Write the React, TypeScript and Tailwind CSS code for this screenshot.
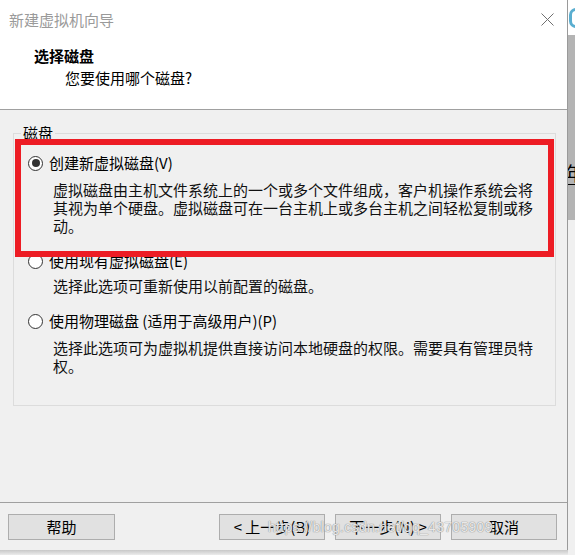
import React from "react";

type DiskOption = {
  label: string;
  desc: string;
  checked?: boolean;
  rowTop: string;
  descTop: string;
};

const options: DiskOption[] = [
  {
    label: "创建新虚拟磁盘(V)",
    desc: "虚拟磁盘由主机文件系统上的一个或多个文件组成，客户机操作系统会将其视为单个硬盘。虚拟磁盘可在一台主机上或多台主机之间轻松复制或移动。",
    checked: true,
    rowTop: "mt-0",
    descTop: "mt-[9px]",
  },
  {
    label: "使用现有虚拟磁盘(E)",
    desc: "选择此选项可重新使用以前配置的磁盘。",
    rowTop: "mt-[17px]",
    descTop: "mt-[7px]",
  },
  {
    label: "使用物理磁盘 (适用于高级用户)(P)",
    desc: "选择此选项可为虚拟机提供直接访问本地硬盘的权限。需要具有管理员特权。",
    rowTop: "mt-[17px]",
    descTop: "mt-[9px]",
  },
];

function Radio({ checked }: { checked?: boolean }) {
  return (
    <span className="w-[15px] h-[15px] rounded-full border border-[#333333] bg-white flex items-center justify-center shrink-0">
      {checked && <span className="w-[8px] h-[8px] rounded-full bg-[#333333]" />}
    </span>
  );
}

function WinButton({ children, className = "" }: { children: React.ReactNode; className?: string }) {
  return (
    <button
      type="button"
      className={`w-[106px] h-[26px] bg-[#e1e1e1] border border-[#adadad] text-[15px] leading-[18px] text-black flex items-center justify-center ${className}`}
    >
      {children}
    </button>
  );
}

export default function App() {
  return (
    <div className="w-[575px] h-[555px] flex bg-[#e6e6e6] overflow-hidden relative font-['Noto_Sans_CJK_SC','Microsoft_YaHei',sans-serif] text-[15px] text-black">
      {/* wizard window */}
      <div className="w-[568px] h-[555px] flex flex-col shrink-0">
        <div className="w-[568px] h-[550px] flex flex-col border-r border-[#9a9a9a]">
          {/* header */}
          <div className="h-[110px] bg-white border-b border-[#a0a0a0] flex flex-col">
            <div className="h-[40px] flex items-center justify-between pl-[9px] pr-[13px]">
              <span className="text-[#9a9a9a] leading-[18px]">新建虚拟机向导</span>
              <svg width="13" height="13" viewBox="0 0 13 13" className="mb-[2px]">
                <path d="M0.5 0.5 L12.5 12.5 M12.5 0.5 L0.5 12.5" stroke="#707070" strokeWidth="1" fill="none" />
              </svg>
            </div>
            <p className="pl-[34px] mt-[7px] leading-[18px] font-bold">选择磁盘</p>
            <p className="pl-[65px] mt-[4px] leading-[18px]">您要使用哪个磁盘?</p>
          </div>

          {/* body */}
          <div className="flex-1 bg-[#f0f0f0] pt-[23px] pl-[13px]">
            <div className="relative w-[543px] h-[273px] border border-[#dcdcdc] pt-[20px]">
              <span className="absolute -top-[10px] left-[7px] px-[2px] bg-[#f0f0f0] leading-[18px]">磁盘</span>
              {options.map((o) => (
                <div key={o.label}>
                  <div className={`flex items-center h-[18px] pl-[14px] ${o.rowTop}`}>
                    <Radio checked={o.checked} />
                    <span className="ml-[6px] leading-[18px] whitespace-nowrap">{o.label}</span>
                  </div>
                  <p className={`pl-[39px] w-[527px] leading-[18px] text-[#111111] ${o.descTop}`}>{o.desc}</p>
                </div>
              ))}
            </div>
          </div>

          {/* footer */}
          <div className="h-[48px] bg-[#f0f0f0] border-t border-[#a0a0a0] flex items-start pt-[11px] pl-[8px] pr-[10px]">
            <WinButton className="w-[107px]">帮助</WinButton>
            <div className="flex-1" />
            <div className="flex gap-[10px]">
              <WinButton>&lt; 上一步(B)</WinButton>
              <WinButton>下一步(N) &gt;</WinButton>
              <WinButton>取消</WinButton>
            </div>
          </div>
        </div>
        <div className="h-[5px] bg-gradient-to-b from-[#c8c8c8] to-[#ececec]" />
      </div>

      {/* window behind, right edge */}
      <div className="flex-1 flex flex-col bg-[#f2f2f2]">
        <div className="h-[35px] bg-white flex items-center">
          <span className="w-[14px] h-[20px] rounded-full border-[3px] border-[#5aaed0] ml-[1px]" />
        </div>
        <div className="h-[185px] bg-[#b4b4b4] pt-[127px] overflow-hidden">
          <span className="block leading-[22px] text-[19px] -ml-[3px] border-b border-black w-[10px]">年</span>
        </div>
        <div className="flex-1 bg-[#f0f0f0]" />
      </div>

      {/* red annotation */}
      <div className="absolute left-[15px] top-[139px] w-[539px] h-[118px] border-[6px] border-[#ed1c24]" />

      {/* watermark */}
      <span className="absolute left-[268px] top-[519px] text-[14px] leading-[16px] text-white/80 font-['Liberation_Sans',sans-serif] tracking-[0.3px] [text-shadow:0_0_1px_#8a8a8a,0_0_1px_#8a8a8a]">
        https://blog.csdn.net/qq_43705909
      </span>
    </div>
  );
}
